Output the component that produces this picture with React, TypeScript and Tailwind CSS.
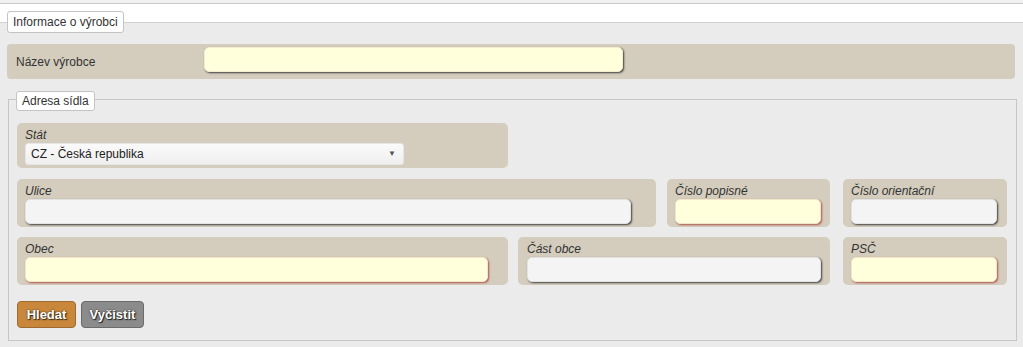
import React from 'react';

const block = 'rounded-[5px] bg-[#d4cdbd] pt-[5px] pl-[8px] pb-[3px]';
const label = 'block h-[15px] text-[12px] italic leading-[14px] text-[#333]';
const inputGray =
  'block h-[25px] rounded-[5px] border border-[#e2e2e2] bg-[#f4f4f4] shadow-[1px_1px_2px_#3f3f3f] outline-none';
const inputYellow =
  'block h-[25px] rounded-[5px] border border-[#f1e6c9] bg-[#ffffdc] shadow-[1px_1px_2px_#b0544e] outline-none';

function Legend({ children, className }: { children: React.ReactNode; className: string }) {
  return (
    <div
      className={`relative block w-fit rounded-[3px] border border-[#c4c4c4] bg-white px-[5px] text-[12px] text-[#333] ${className}`}
    >
      {children}
    </div>
  );
}

function Field({
  title,
  width,
  inputWidth,
  yellow,
}: {
  title: string;
  width: string;
  inputWidth: string;
  yellow?: boolean;
}) {
  return (
    <div className={`${block} ${width}`}>
      <span className={label}>{title}</span>
      <input type="text" className={`${yellow ? inputYellow : inputGray} ${inputWidth}`} />
    </div>
  );
}

export default function App() {
  return (
    <div className="flex h-[347px] w-[1023px] flex-col overflow-hidden bg-white font-['Liberation_Sans',Arial,sans-serif] text-[12px] text-[#333]">
      <div className="h-[4px] shrink-0 border-b border-[#c9c9c9] bg-[#f1f1f1]" />
      <div className="h-[18px] shrink-0" />

      {/* Informace o výrobci */}
      <div className="flex-1 border-t border-[#cfcfcf] bg-[#ebebeb] px-[7px]">
        <Legend className="-mt-[12px] h-[22px] leading-[20px]">Informace o výrobci</Legend>

        <div className="mt-[11px] flex h-[35px] w-[1008px] items-center rounded-[4px] bg-[#d4cdbd] pl-[9px]">
          <span className="w-[188px] text-[12px] text-[#333]">Název výrobce</span>
          <input
            type="text"
            className="-mt-[5px] h-[25px] w-[419px] rounded-[5px] border border-[#f3eccf] bg-[#ffffdc] shadow-[1px_1px_2px_#3f3f3f] outline-none"
          />
        </div>

        {/* Adresa sídla */}
        <div className="ml-[1px] mt-[20px] h-[242px] w-[1009px] border border-[#c6c6c6] pl-[8px]">
          <Legend className="-mt-[9px] ml-[-1px] h-[20px] leading-[18px]">Adresa sídla</Legend>

          <div className="mt-[12px] flex flex-col">
            <div className={`${block} h-[45px] w-[491px]`}>
              <span className={label}>Stát</span>
              <div className="flex h-[22px] w-[379px] items-center justify-between rounded-[3px] border border-[#e6e6e6] bg-gradient-to-b from-[#fafafa] to-[#efefef] pl-[5px] pr-[7px] text-[12px] text-[#222]">
                <span>CZ - Česká republika</span>
                <span className="text-[8px] text-[#555]">▼</span>
              </div>
            </div>

            <div className="mt-[11px] flex h-[48px]">
              <Field title="Ulice" width="w-[639px]" inputWidth="w-[606px]" />
              <div className="ml-[11px]">
                <Field title="Číslo popisné" width="w-[163px]" inputWidth="w-[146px]" yellow />
              </div>
              <div className="ml-[13px]">
                <Field title="Číslo orientační" width="w-[164px]" inputWidth="w-[146px]" />
              </div>
            </div>

            <div className="mt-[10px] flex h-[48px]">
              <Field title="Obec" width="w-[491px]" inputWidth="w-[463px]" yellow />
              <div className="ml-[10px]">
                <div className={`${block} w-[312px] pl-[9px]`}>
                  <span className={label}>Část obce</span>
                  <input type="text" className={`${inputGray} w-[294px]`} />
                </div>
              </div>
              <div className="ml-[13px]">
                <Field title="PSČ" width="w-[164px]" inputWidth="w-[146px]" yellow />
              </div>
            </div>

            <div className="mt-[16px] flex gap-[5px]">
              <button
                type="button"
                className="h-[27px] w-[59px] rounded-[4px] border border-[#9f6a2f] bg-[#c9873c] text-[13px] font-bold text-white [text-shadow:0_0_2px_#3a2a10,1px_1px_1px_#3a2a10]"
              >
                Hledat
              </button>
              <button
                type="button"
                className="h-[27px] w-[63px] rounded-[4px] border border-[#6b6b6b] bg-[#8b8b8b] text-[13px] font-bold text-white [text-shadow:0_0_2px_#222,1px_1px_1px_#222]"
              >
                Vyčistit
              </button>
            </div>
          </div>
        </div>
      </div>
    </div>
  );
}
